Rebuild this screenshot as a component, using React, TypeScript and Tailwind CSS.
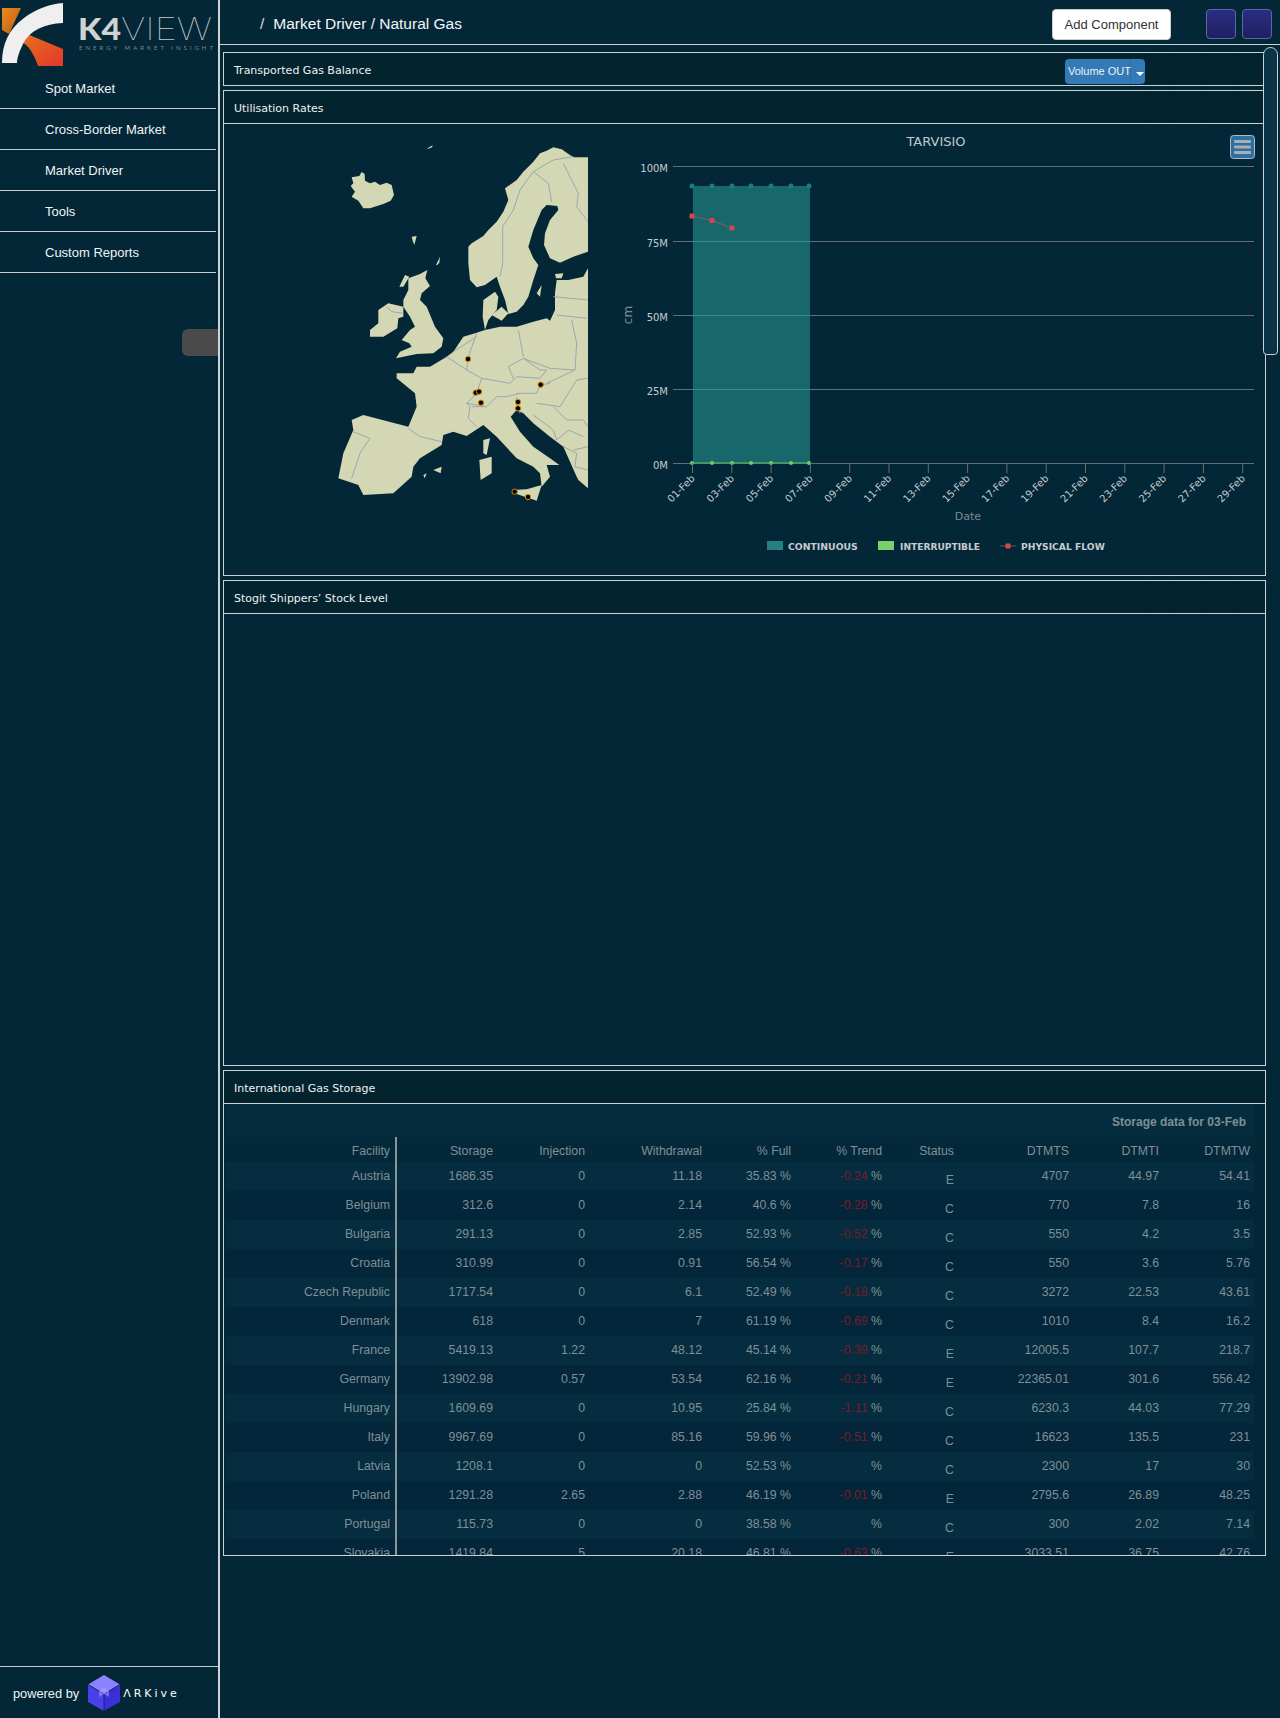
import { ReactNode } from 'react'

const rows = [
  ['Austria', '1686.35', '0', '11.18', '35.83', '-0.24', 'E', '4707', '44.97', '54.41'],
  ['Belgium', '312.6', '0', '2.14', '40.6', '-0.28', 'C', '770', '7.8', '16'],
  ['Bulgaria', '291.13', '0', '2.85', '52.93', '-0.52', 'C', '550', '4.2', '3.5'],
  ['Croatia', '310.99', '0', '0.91', '56.54', '-0.17', 'C', '550', '3.6', '5.76'],
  ['Czech Republic', '1717.54', '0', '6.1', '52.49', '-0.18', 'C', '3272', '22.53', '43.61'],
  ['Denmark', '618', '0', '7', '61.19', '-0.69', 'C', '1010', '8.4', '16.2'],
  ['France', '5419.13', '1.22', '48.12', '45.14', '-0.39', 'E', '12005.5', '107.7', '218.7'],
  ['Germany', '13902.98', '0.57', '53.54', '62.16', '-0.21', 'E', '22365.01', '301.6', '556.42'],
  ['Hungary', '1609.69', '0', '10.95', '25.84', '-1.11', 'C', '6230.3', '44.03', '77.29'],
  ['Italy', '9967.69', '0', '85.16', '59.96', '-0.51', 'C', '16623', '135.5', '231'],
  ['Latvia', '1208.1', '0', '0', '52.53', '', 'C', '2300', '17', '30'],
  ['Poland', '1291.28', '2.65', '2.88', '46.19', '-0.01', 'E', '2795.6', '26.89', '48.25'],
  ['Portugal', '115.73', '0', '0', '38.58', '', 'C', '300', '2.02', '7.14'],
  ['Slovakia', '1419.84', '5', '20.18', '46.81', '-0.63', 'E', '3033.51', '36.75', '42.76'],
]

const columns = ['Storage', 'Injection', 'Withdrawal', '% Full', '% Trend', 'Status', 'DTMTS', 'DTMTI', 'DTMTW']
const columnWidths = [171, 101, 92, 117, 89, 91, 72, 115, 90, 91]
const menu = ['Spot Market', 'Cross-Border Market', 'Market Driver', 'Tools', 'Custom Reports']

// traced by eye, in 3x map pixels
const land = [
  '92,168 100,160 95,142 118,138 125,126 134,132 135,152 150,160 165,155 180,165 200,158 215,165 222,195 212,212 190,222 150,235 130,235 115,212 95,200 105,185',
  '322,55 338,46 336,52 325,56',
  '275,320 290,318 283,345 278,332',
  '348,405 360,380 358,398 352,405',
  '238,470 255,435 268,440 250,470',
  '265,445 300,432 322,420 316,445 330,468 305,490 300,510 320,530 345,590 370,625 365,650 340,670 290,672 228,685 240,665 275,650 268,640 245,630 270,600 285,590 270,560 250,530 250,510 265,480',
  '175,540 205,520 250,530 250,560 235,565 232,595 190,620 150,620 150,600 175,580',
  '445,350 455,340 490,318 505,300 530,275 550,245 565,210 555,175 590,150 610,125 640,95 660,70 680,62 700,52 725,58 740,68 760,82 804,82 804,365 760,380 720,398 690,385 672,345 675,310 690,270 715,240 712,228 680,225 665,240 640,300 625,350 640,385 655,405 640,450 625,500 610,525 590,545 565,552 555,510 540,470 530,440 495,465 470,472 450,450 445,400',
  '495,600 540,590 590,590 640,575 680,565 690,572 705,540 705,490 710,450 745,450 790,440 804,415 804,1075 775,1050 770,1040 730,950 690,920 640,880 610,850 590,840 572,860 600,905 640,950 690,985 718,1005 680,1005 690,1040 665,1070 660,1030 640,1010 590,985 530,920 490,885 440,918 400,905 370,915 365,945 300,985 280,1010 275,1040 220,1090 130,1095 115,1065 55,1045 70,970 100,900 95,870 130,855 265,890 290,830 285,790 230,745 230,730 280,730 290,710 330,710 380,680 400,665 430,620 465,610',
  '490,510 525,485 535,500 530,540 505,570 495,600 488,560',
  '515,555 545,530 565,550 545,572',
  '575,1080 620,1078 665,1065 650,1112 590,1092',
  '478,990 515,980 515,1030 482,1050',
  '490,930 510,925 500,975 490,970',
  '340,1020 365,1010 362,1030',
  '310,1035 320,1030 314,1045',
  '650,490 665,465 660,500',
  '705,432 730,430 725,445 708,445',
]

const borders = [
  'M200,530 L215,545 250,550',
  'M540,440 L548,400 L548,290 L580,240 L600,180 L640,125 L685,160 L695,215',
  'M640,125 L700,90 L730,85 L760,80',
  'M730,100 L775,190 L770,230 L804,275',
  'M100,905 L150,925 L120,970 L110,1000 L95,1045',
  'M265,895 L300,920 L365,935',
  'M380,680 L440,720 L485,745 L470,790 L440,820 L450,830 L445,865 L470,890',
  'M400,665 L470,620',
  'M470,610 L445,680 L440,720',
  'M440,820 L500,830 L530,800 L560,800 L600,790',
  'M485,745 L570,760 L590,740 L660,745',
  'M565,710 L610,685 L660,720 L680,720 L660,745',
  'M565,710 L580,745',
  'M595,600 L610,680',
  'M610,685 L690,715 L765,720 L770,640 L755,570',
  'M710,555 L800,565',
  'M700,500 L804,510',
  'M590,790 L650,790 L660,765 L690,760',
  'M680,760 L765,720',
  'M650,820 L720,830 L770,750 L804,745',
  'M640,855 L700,900 L710,930 L745,900 L790,920',
  'M760,960 L804,950',
  'M700,830 L740,870 L790,870 L804,890',
  'M730,950 L770,970 L765,1010 L804,1020',
  'M590,800 L600,850',
  'M500,830 L455,830',
]

const markers = [
  [444, 687],
  [467, 788],
  [477, 785],
  [483, 818],
  [662, 764],
  [594, 816],
  [594, 835],
  [584, 1085],
  [624, 1101],
]

const dayTicks = [692, 712, 732, 751, 771, 791, 809]
const dateTicks = ['01', '03', '05', '07', '09', '11', '13', '15', '17', '19', '21', '23', '25', '27', '29']
const gridLines = [
  ['100M', 166],
  ['75M', 241],
  ['50M', 315],
  ['25M', 389],
  ['0M', 463],
] as const

function EuropeMap() {
  return (
    <svg viewBox="0 0 804 1200" className="w-[268px] h-[400px] shrink-0">
      {land.map((points) => (
        <polygon key={points} points={points} fill="#d3d7b3" />
      ))}
      {borders.map((d) => (
        <path key={d} d={d} fill="none" stroke="#9ea6ae" strokeWidth="3" />
      ))}
      {markers.map(([x, y]) => (
        <circle key={`${x}-${y}`} cx={x} cy={y} r="8" fill="#000" stroke="#d98a00" strokeWidth="3" />
      ))}
    </svg>
  )
}

function GasChart() {
  return (
    <svg viewBox="600 130 665 430" className="w-[665px] h-[430px] shrink-0" fontFamily="'DejaVu Sans', sans-serif">
      <text x="936" y="146" textAnchor="middle" fontSize="13" fill="#c2c9cc">TARVISIO</text>
      {gridLines.map(([label, y]) => (
        <g key={label}>
          <line x1="673" x2="1254" y1={y + 0.5} y2={y + 0.5} stroke="#666e72" />
          <text x="668" y={y + 6} textAnchor="end" fontSize="10" fill="#c5ccd0">{label}</text>
        </g>
      ))}
      <rect x="693" y="186" width="117" height="277" fill="#2a9d98" fillOpacity="0.55" />
      <line x1="692" x2="810" y1="463" y2="463" stroke="#4f9f6a" strokeWidth="1.5" />
      {dayTicks.map((x) => (
        <g key={x}>
          <circle cx={x} cy="186" r="2.5" fill="#1f7a7a" />
          <circle cx={x} cy="463" r="2" fill="#6fcf6f" />
        </g>
      ))}
      <polyline points="692,216 712,220.5 732,228" fill="none" stroke="#8a5a62" />
      <rect x="689.5" y="213.5" width="5" height="5" fill="#d0494f" />
      <rect x="709.5" y="218" width="5" height="5" fill="#d0494f" />
      <rect x="729.5" y="225.5" width="5" height="5" fill="#d0494f" />
      {dateTicks.map((day, i) => {
        const x = 692.5 + i * 39.3
        return (
          <g key={day}>
            <line x1={x} x2={x} y1="463" y2="473" stroke="#666e72" />
            <text
              x={x + 3}
              y="479"
              textAnchor="end"
              fontSize="10"
              fill="#c5ccd0"
              transform={`rotate(-45 ${x + 3} 479)`}
            >
              {day}-Feb
            </text>
          </g>
        )
      })}
      <text x="632" y="315" textAnchor="middle" fontSize="12" fill="#7e8a90" transform="rotate(-90 632 315)">cm</text>
      <text x="968" y="520" textAnchor="middle" fontSize="11" fill="#7e8a90">Date</text>
      <rect x="767" y="541" width="16" height="9" fill="#258080" />
      <text x="788" y="550" fontSize="9.3" fontWeight="700" fill="#c5ccd0">CONTINUOUS</text>
      <rect x="878" y="541" width="16" height="9" fill="#78d070" />
      <text x="900" y="550" fontSize="9.1" fontWeight="700" fill="#c5ccd0">INTERRUPTIBLE</text>
      <line x1="1000" x2="1016" y1="546" y2="546" stroke="#6a4a52" />
      <rect x="1005.5" y="543.5" width="5" height="5" fill="#d0494f" />
      <text x="1021" y="550" fontSize="9.2" fontWeight="700" fill="#c5ccd0">PHYSICAL FLOW</text>
      <rect x="1230.5" y="135.5" width="24" height="23" rx="3" fill="#2f6f9f" stroke="#a8bccb" />
      <rect x="1234" y="140" width="17" height="3" rx="1" fill="#a9aeb2" />
      <rect x="1234" y="145.5" width="17" height="3" rx="1" fill="#a9aeb2" />
      <rect x="1234" y="151" width="17" height="3" rx="1" fill="#a9aeb2" />
    </svg>
  )
}

function Logo() {
  return (
    <svg viewBox="0 0 218 68" className="w-[218px] h-[68px] shrink-0">
      <defs>
        <linearGradient id="logoTop" x1="0" y1="0" x2="1" y2="1">
          <stop offset="0" stopColor="#f08a1c" />
          <stop offset="1" stopColor="#b85a12" />
        </linearGradient>
        <linearGradient id="logoLow" x1="0" y1="0" x2="1" y2="1">
          <stop offset="0" stopColor="#e8701c" />
          <stop offset="1" stopColor="#e2382a" />
        </linearGradient>
      </defs>
      <polygon points="2,8 21,8 9,34 2,30" fill="url(#logoTop)" />
      <path d="M27 34 L63 49 L63 66 L38 66 C34 54 28 44 21 42 Z" fill="url(#logoLow)" />
      <path d="M63 3 L63 23 C44 24 30 30 23 44 C19 52 17 58 17 63 L2 63 C2 44 9 29 24 18 C36 9 50 4 63 3 Z" fill="#efefef" />
      <text x="78" y="40" fontFamily="Lato, sans-serif" fontWeight="900" fontSize="31" fill="#d2d2d2" textLength="43" lengthAdjust="spacingAndGlyphs">K4</text>
      <text x="121" y="40" fontFamily="Inter, sans-serif" fontWeight="100" fontSize="31" fill="#c8cccd" textLength="91" lengthAdjust="spacingAndGlyphs">VIEW</text>
      <text x="79" y="50" fontFamily="Lato, sans-serif" fontSize="6" fill="#7b8a90" textLength="134">ENERGY MARKET INSIGHT</text>
    </svg>
  )
}

function Cube() {
  return (
    <svg viewBox="0 0 32 36" className="w-8 h-9 shrink-0">
      <polygon points="16,0 32,9.5 16,19 0,9.5" fill="#8b82ff" />
      <polygon points="0,9.5 16,19 16,36 0,27" fill="#4a40ea" />
      <polygon points="32,9.5 16,19 16,36 32,27" fill="#3a30d6" />
      <path d="M0 9.5 L16 19 L32 9.5 M16 19 L16 36" fill="none" stroke="#1a1a50" strokeWidth="0.8" />
      <polygon points="16,12 21,15.5 21,22 16,19 11,22 11,15.5" fill="#a9a2ff" fillOpacity="0.5" />
    </svg>
  )
}

function PanelHeader({ title, children }: { title: string; children?: ReactNode }) {
  return (
    <div className="h-[34px] border border-[#c9d2d4] flex items-stretch bg-[#03242f] shrink-0">
      <div className="flex-1 flex items-center pl-[10px] pt-[5px] text-[#eef2f3] text-[11px] font-['DejaVu_Sans',sans-serif]">
        {title}
      </div>
      {children}
      <div className="w-[31px] border-l border-[#02202b]" />
      <div className="w-[30px] border-l border-[#02202b]" />
      <div className="w-[30px] border-l border-[#02202b]" />
      <div className="w-[30px] border-l border-[#02202b]" />
    </div>
  )
}

function StorageTable() {
  return (
    <table className="table-fixed border-collapse w-[1029px] ml-px text-[12.3px] leading-[15px] text-[#7f8f96] font-['Liberation_Sans',Arial,sans-serif]">
      <colgroup>
        {columnWidths.map((width, i) => (
          <col key={i} style={{ width }} />
        ))}
      </colgroup>
      <thead>
        <tr className="bg-[#052c3c]">
          <th colSpan={10} className="h-[33px] p-0 pt-[4px] pr-2 text-right font-bold text-[12px] text-[#7f8f96]">
            Storage data for 03-Feb
          </th>
        </tr>
        <tr className="bg-[#03283a]">
          <th className="h-[25px] p-0 pt-[4px] pr-[5px] text-right font-normal border-r-2 border-[#8a9599]">Facility</th>
          {columns.map((col) => (
            <th key={col} className="h-[25px] p-0 pt-[4px] pr-1 text-right font-normal">
              {col}
            </th>
          ))}
        </tr>
      </thead>
      <tbody>
        {rows.map((row, i) => (
          <tr key={row[0]} className={i % 2 === 0 ? 'bg-[#052d3f]' : 'bg-[#03263a]'}>
            {row.map((cell, j) => (
              <td
                key={j}
                className={`h-[29px] p-0 align-top text-right ${j === 6 ? 'pt-[11px]' : 'pt-[7px]'} ${j === 0 ? 'pr-[5px] border-r-2 border-[#8a9599]' : 'pr-1'}`}
              >
                {j === 5 ? (
                  <>
                    <span className="text-[#7a1a28]">{cell}</span> %
                  </>
                ) : j === 4 ? (
                  `${cell} %`
                ) : (
                  cell
                )}
              </td>
            ))}
          </tr>
        ))}
      </tbody>
    </table>
  )
}

export default function App() {
  return (
    <div className="relative h-[1718px] w-[1280px] overflow-hidden bg-[#032737] flex font-['Liberation_Sans',Arial,sans-serif]">
      <aside className="relative w-[220px] shrink-0 border-r-[2px] border-[#cfd3d4] flex flex-col">
        <Logo />
        <nav className="flex flex-col">
          {menu.map((item) => (
            <div
              key={item}
              className="h-[41px] w-[216px] border-b-[1.5px] border-[#c9cfd1] flex items-center pl-[45px] pt-[2px] text-[13px] text-[#f0f4f5]"
            >
              {item}
            </div>
          ))}
        </nav>
        <div className="absolute right-0 top-[329px] w-[36px] h-[27px] bg-[#4a4a4a] rounded-l-md" />
        <div className="mt-auto h-[52px] w-[218px] border-t-[1.5px] border-[#c9cfd1] flex items-center pl-[13px]">
          <span className="text-[12.8px] pt-[2px] text-[#f0f4f5] mr-[9px]">powered by</span>
          <Cube />
          <span className="ml-[3px] pt-[4px] text-[11px] text-white tracking-[3px] font-['DejaVu_Sans',sans-serif]">ΛRKive</span>
        </div>
      </aside>

      <main className="relative flex-1 flex flex-col">
        <header className="h-[45px] border-b border-[#c9d2d4] flex items-center shrink-0 pl-[40px] pr-[8px] pt-[4px]">
          <span className="text-[15.5px] text-[#d8dde0] mr-[9px]">/</span>
          <span className="text-[15.5px] text-[#f4f6f7]">Market Driver / Natural Gas</span>
          <button className="ml-auto w-[119px] h-[31px] pt-[2px] bg-white rounded-sm text-[13px] text-[#333] border border-[#ccc]">
            Add Component
          </button>
          <div className="ml-[35px] w-[30px] h-[30px] rounded-sm border border-[#5a6aa0] bg-gradient-to-b from-[#2a2d84] to-[#1f2060]" />
          <div className="ml-[6px] w-[30px] h-[30px] rounded-sm border border-[#5a6aa0] bg-gradient-to-b from-[#2a2d84] to-[#1f2060]" />
        </header>

        <div className="w-[1043px] ml-[3px] mt-[7px] flex flex-col">
          <PanelHeader title="Transported Gas Balance">
            <div className="w-[80px] relative">
              <div className="absolute left-[1px] top-[6px] h-[25px] w-[80px] rounded-sm bg-[#337ab7] flex text-[11px] text-[#eef4f8] items-center whitespace-nowrap">
                <span className="w-[66px] pl-[3px] border-r border-[#2e6da4] h-full flex items-center">Volume OUT</span>
                <span className="ml-[5px] mt-[5px] border-x-[4px] border-t-[4px] border-x-transparent border-t-white" />
              </div>
            </div>
          </PanelHeader>

          <div className="mt-1">
            <PanelHeader title="Utilisation Rates" />
            <div className="h-[452px] border-x border-b border-[#c9d2d4] flex items-start pl-[96px] pt-[6px] overflow-hidden">
              <EuropeMap />
              <div className="ml-[12px]">
                <GasChart />
              </div>
            </div>
          </div>

          <div className="mt-1">
            <PanelHeader title="Stogit Shippers’ Stock Level" />
            <div className="h-[452px] border-x border-b border-[#c9d2d4]" />
          </div>

          <div className="mt-1">
            <PanelHeader title="International Gas Storage" />
            <div className="h-[452px] border-x border-b border-[#c9d2d4] overflow-hidden">
              <StorageTable />
            </div>
          </div>
        </div>

        <div className="absolute left-[1043px] top-[47px] w-[15px] h-[308px] rounded-t-lg rounded-b-sm border border-[#c9d2d4] bg-[#0a3445]" />
      </main>
    </div>
  )
}
